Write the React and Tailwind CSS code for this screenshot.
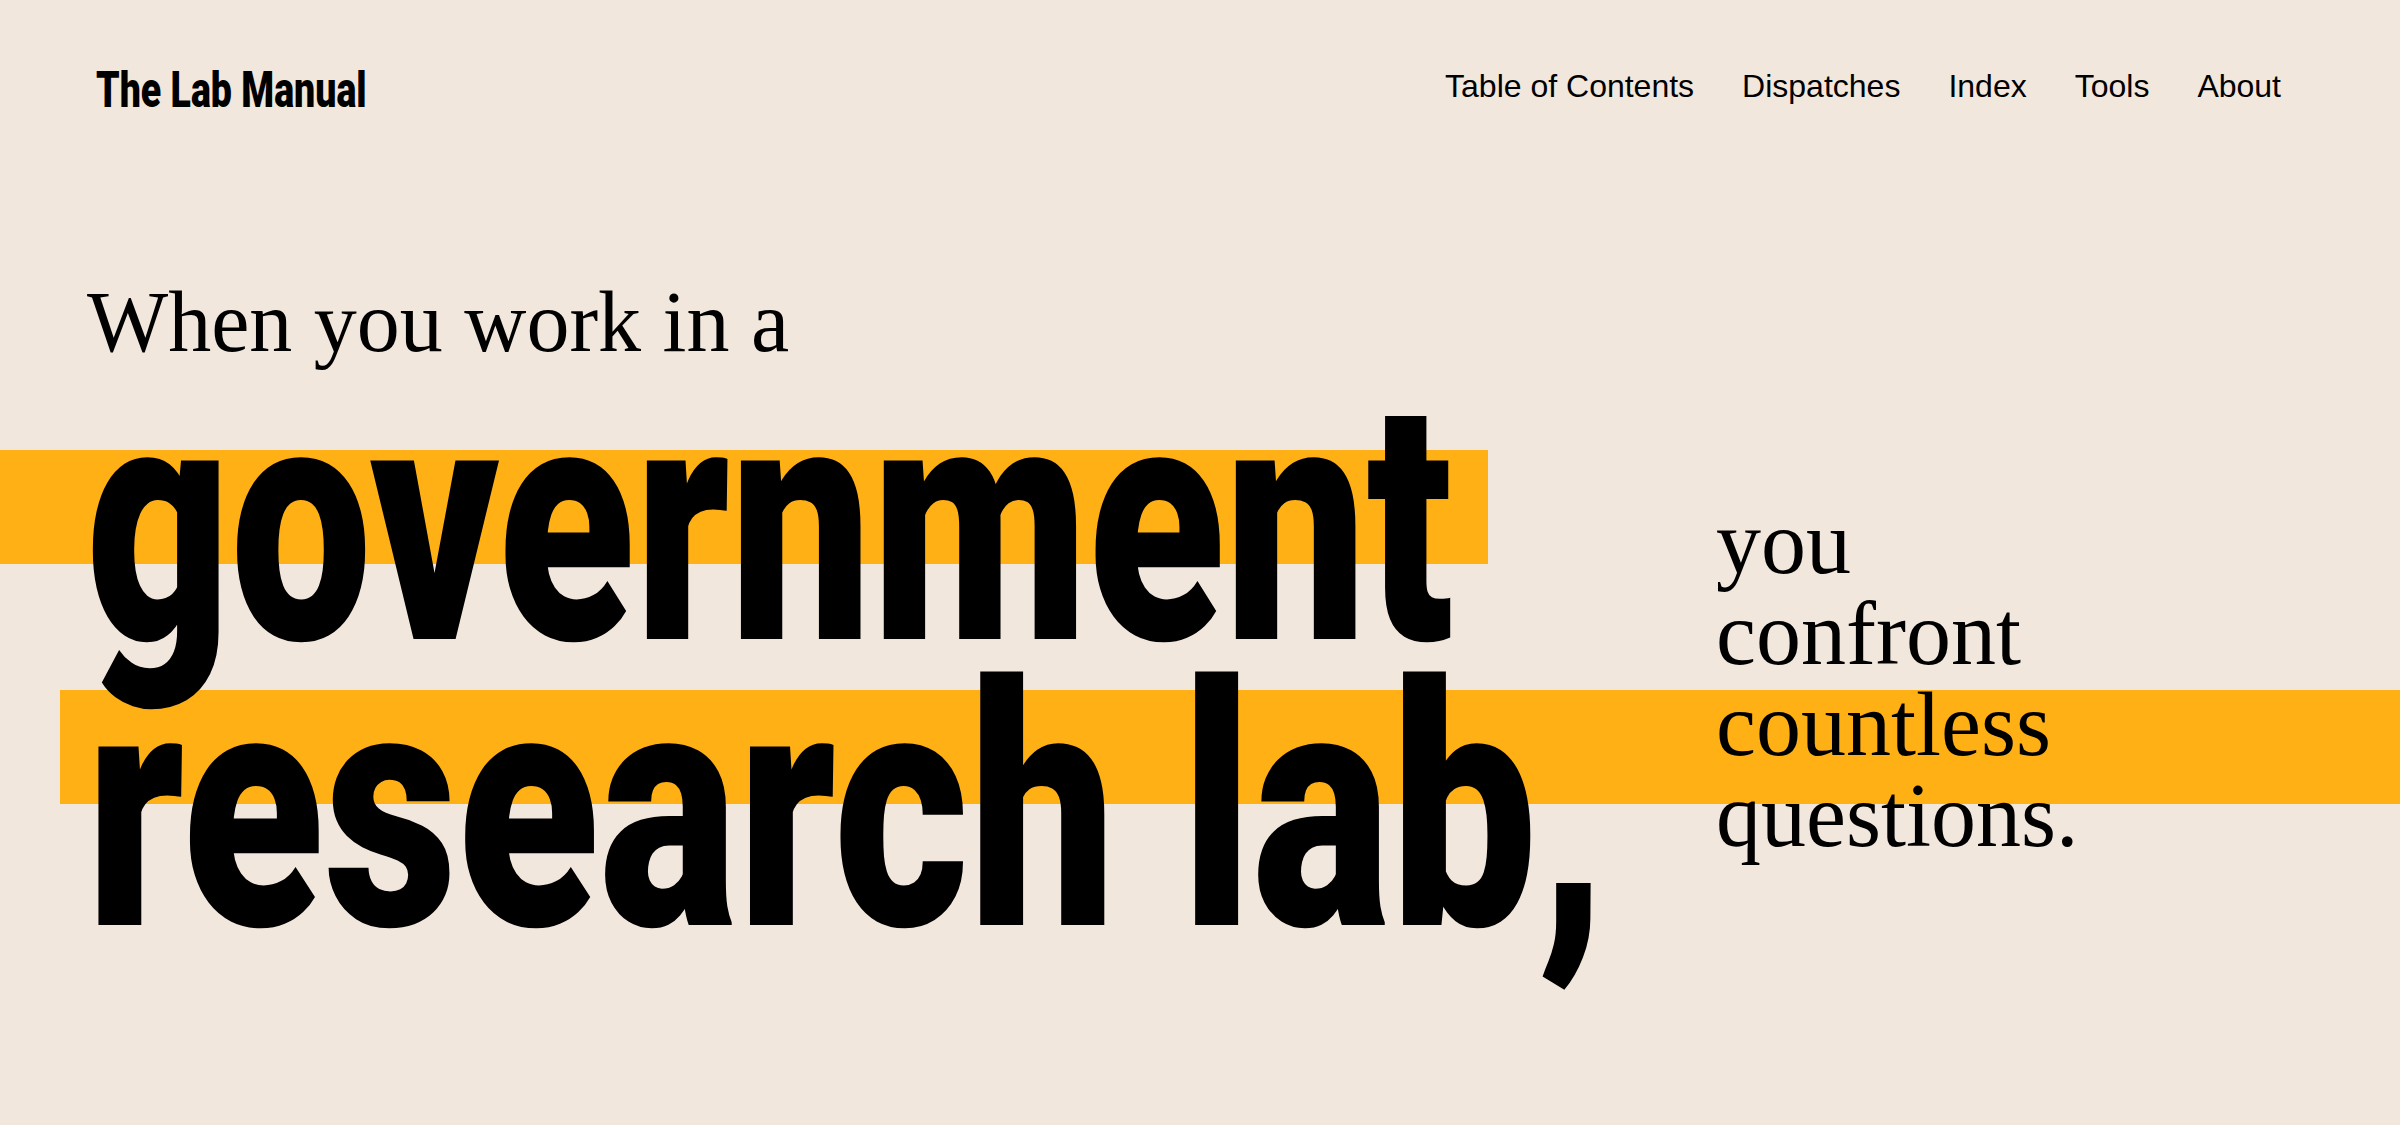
const links = ['Table of Contents', 'Dispatches', 'Index', 'Tools', 'About'];

const questionLines = ['you', 'confront', 'countless', 'questions.'];

export default function App() {
  return (
    <div className="min-h-[1125px] w-full overflow-hidden bg-[#f1e7dc] text-black">
      <header className="flex items-start justify-between pl-[96px] pr-[119px] pt-[65px]">
        <a
          href="#"
          className="block h-[50px] origin-left scale-x-[0.75] whitespace-nowrap text-[50px] leading-[50px] font-black [font-family:Roboto,sans-serif]"
        >
          The Lab Manual
        </a>
        <nav className="mt-[5px] flex gap-[48px] text-[32px] leading-[32px] [font-family:'Liberation_Sans',Arial,sans-serif]">
          {links.map((link) => (
            <a key={link} href="#" className="whitespace-nowrap">
              {link}
            </a>
          ))}
        </nav>
      </header>

      <main className="relative flex items-start">
        {/* highlight bars sit behind the type */}
        <div aria-hidden="true" className="absolute left-0 top-[335px] h-[114px] w-[1488px] bg-[#ffb014]" />
        <div aria-hidden="true" className="absolute left-[60px] right-0 top-[575px] h-[114px] bg-[#ffb014]" />

        <div className="relative w-[1716px] shrink-0 pt-[164px]">
          <p className="whitespace-nowrap pl-[87px] text-[86px] leading-[86px] [font-family:'Liberation_Serif','Times_New_Roman',serif]">
            When you work in a
          </p>
          <h1 className="mt-[16px] whitespace-nowrap text-[338px] font-black [font-family:Roboto,sans-serif]">
            <span className="block h-[286px] pl-[86px] leading-[286px]">
              <span className="inline-block origin-left scale-x-[0.743]">government</span>
            </span>
            <span className="block h-[286px] pl-[86px] leading-[286px]">
              <span className="inline-block origin-left scale-x-[0.77]">research lab,</span>
            </span>
          </h1>
        </div>

        <p className="relative pt-[382px] text-[90px] leading-[91px] [font-family:'Liberation_Serif','Times_New_Roman',serif]">
          {questionLines.map((line) => (
            <span key={line} className="block whitespace-nowrap">
              {line}
            </span>
          ))}
        </p>
      </main>
    </div>
  );
}
